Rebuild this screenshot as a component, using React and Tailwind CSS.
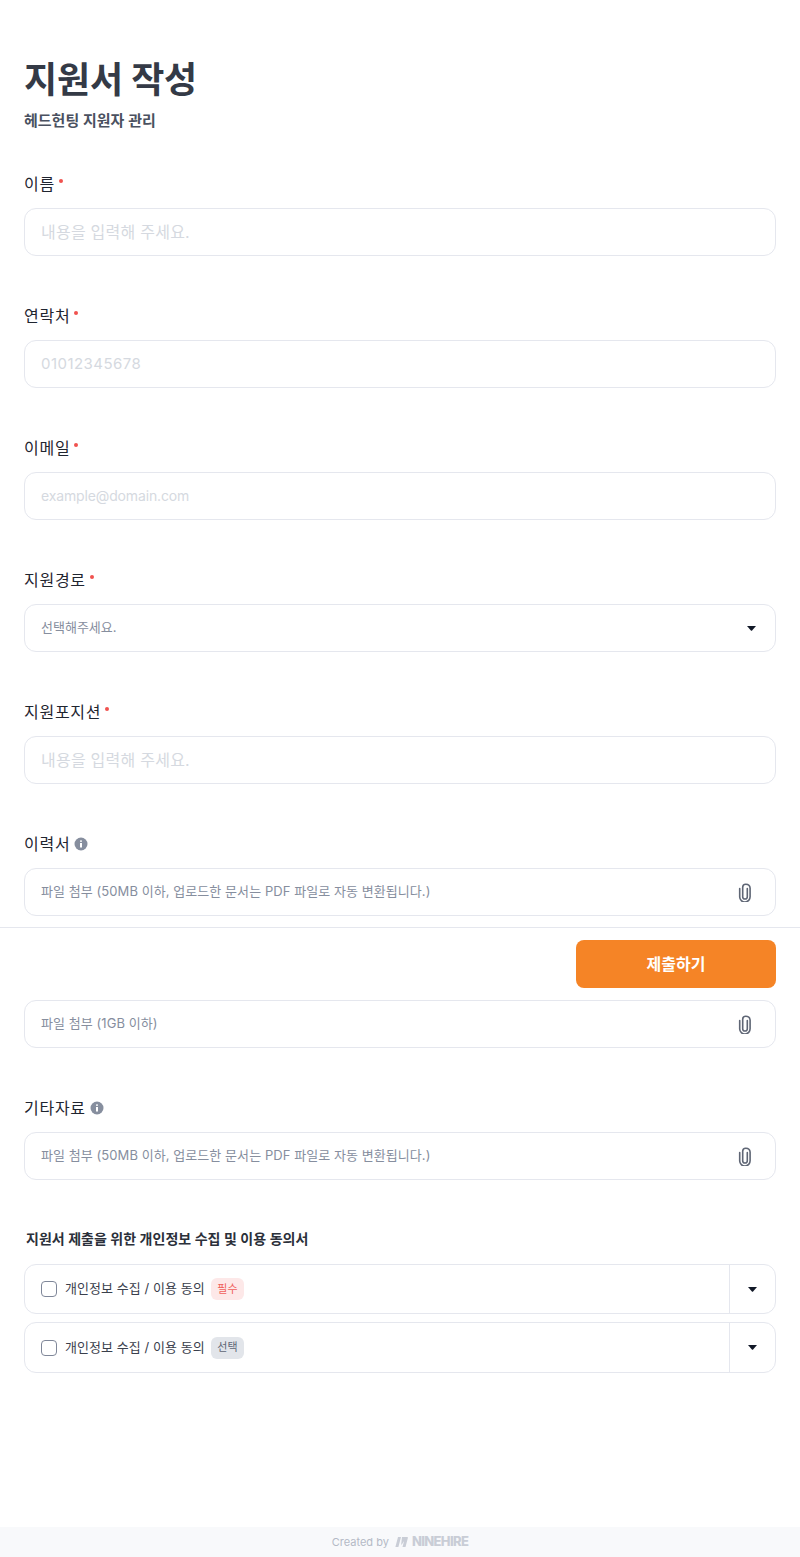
const fields = [
  { label: '이름', required: true, placeholder: '내용을 입력해 주세요.', kind: 'text', textClass: 'text-base tracking-[0.015em]' },
  { label: '연락처', required: true, placeholder: '01012345678', kind: 'text', textClass: 'text-[15px] tracking-[0.03em]' },
  { label: '이메일', required: true, placeholder: 'example@domain.com', kind: 'text', textClass: 'text-sm tracking-[-0.01em]' },
  { label: '지원경로', required: true, placeholder: '선택해주세요.', kind: 'select' },
  { label: '지원포지션', required: true, placeholder: '내용을 입력해 주세요.', kind: 'text', textClass: 'text-base tracking-[0.015em]' },
  { label: '이력서', info: true, placeholder: '파일 첨부 (50MB 이하, 업로드한 문서는 PDF 파일로 자동 변환됩니다.)', kind: 'file' },
  { label: '포트폴리오', info: true, placeholder: '파일 첨부 (1GB 이하)', kind: 'file' },
  { label: '기타자료', info: true, placeholder: '파일 첨부 (50MB 이하, 업로드한 문서는 PDF 파일로 자동 변환됩니다.)', kind: 'file' },
];

function Caret() {
  return (
    <svg width="9" height="5" viewBox="0 0 9 5" className="shrink-0">
      <path d="M0 0h9L5.1 4.6a.9.9 0 0 1-1.2 0z" fill="#111827" />
    </svg>
  );
}

function InfoIcon() {
  return (
    <svg width="14" height="14" viewBox="0 0 14 14">
      <circle cx="7" cy="7" r="6.5" fill="#868e9e" />
      <rect x="6" y="6" width="2" height="4.5" fill="#fff" />
      <rect x="6" y="3.2" width="2" height="1.8" rx="0.9" fill="#fff" />
    </svg>
  );
}

function ClipIcon() {
  return (
    <svg width="14" height="19" viewBox="0 0 14 19" fill="none" stroke="#5f6675" strokeWidth="1.6" strokeLinecap="round" className="shrink-0">
      <path d="M9.3 5.5v8.2a2.3 2.3 0 0 1-4.6 0V4.2a3 3 0 0 1 3-3h.2a4.2 4.2 0 0 1 4.2 3.8v8.6a5.2 5.2 0 0 1-10.4.4V5.5" />
    </svg>
  );
}

function Field({ field }) {
  return (
    <div className="flex flex-col gap-3">
      <div className="flex h-6 items-center gap-1 text-base tracking-[0.045em] text-[#1f2530]">
        <span>{field.label}</span>
        {field.required && <span className="mb-1.5 h-1 w-1 rounded-full bg-[#f0524f]" />}
        {field.info && <InfoIcon />}
      </div>
      {field.kind === 'text' && (
        <div className={`flex h-12 items-center rounded-xl border border-[#e5e7ee] px-4 text-[#d5d9e0] ${field.textClass}`}>
          {field.placeholder}
        </div>
      )}
      {field.kind === 'select' && (
        <div className="flex h-12 items-center justify-between rounded-xl border border-[#e5e7ee] pl-4 pr-[19px] text-[13px] text-[#868e9e]">
          <span>{field.placeholder}</span>
          <Caret />
        </div>
      )}
      {field.kind === 'file' && (
        <div className="flex h-12 items-center justify-between rounded-xl border border-[#e5e7ee] pl-4 pr-[23px] text-[13px] tracking-[0.005em] text-[#868e9e]">
          <span>{field.placeholder}</span>
          <ClipIcon />
        </div>
      )}
    </div>
  );
}

function Consent({ badge, badgeClass, heightClass }) {
  return (
    <div className={`flex items-stretch rounded-xl border border-[#e5e7ee] ${heightClass}`}>
      <div className="flex flex-1 items-center pl-4">
        <span className="h-4 w-4 rounded border border-[#7f8799]" />
        <span className="ml-2 text-[13px] tracking-[0.005em] text-[#3a404c]">개인정보 수집 / 이용 동의</span>
        <span className={`ml-1.5 flex h-[22px] w-[33px] items-center justify-center rounded-md text-[11px] ${badgeClass}`}>{badge}</span>
      </div>
      <div className="flex w-[46px] items-center justify-center border-l border-[#e5e7ee]">
        <Caret />
      </div>
    </div>
  );
}

export default function App() {
  return (
    <div className="relative flex h-[1557px] flex-col bg-white font-['Inter','Noto_Sans_CJK_KR',sans-serif]">
      <div className="flex-1 px-6 pt-[54px]">
        <h1 className="text-[36px] font-bold leading-[52px] tracking-[-0.005em] text-[#343a46]">지원서 작성</h1>
        <p className="mt-[3px] text-[15px] font-semibold leading-6 text-[#4a5160]">헤드헌팅 지원자 관리</p>

        <div className="mt-[39px] flex flex-col gap-12">
          {fields.map((f) => (
            <Field key={f.label} field={f} />
          ))}
        </div>

        <p className="ml-0.5 mt-[49px] text-sm font-semibold leading-5 text-[#2b303a]">지원서 제출을 위한 개인정보 수집 및 이용 동의서</p>
        <div className="mt-[15px] flex flex-col gap-2">
          <Consent badge="필수" badgeClass="bg-[#fde8e8] text-[#f0605c]" heightClass="h-[50px]" />
          <Consent badge="선택" badgeClass="bg-[#e2e5ea] text-[#5f6675]" heightClass="h-[51px]" />
        </div>
      </div>

      {/* submit bar sits over the form */}
      <div className="absolute inset-x-0 top-[927px] flex h-[73px] justify-end border-t border-[#e5e7ee] bg-white px-6 pt-3">
        <button type="button" className="h-12 w-[200px] rounded-lg bg-[#f58426] text-base font-semibold text-white">제출하기</button>
      </div>

      <div className="flex h-[30px] items-center justify-center gap-1.5 bg-[#f8f9fb] text-[11px] text-[#b4bac6]">
        <span>Created by</span>
        <span className="flex items-center gap-1 text-[#c9cdd6]">
          <svg width="13" height="10" viewBox="0 0 13 10">
            <path d="M3 0h3L3.4 10H0.4zM7 0h5c.8 0 1 .5.8 1.2L10.5 10h-3l1.6-6-2.6 4-.3-1z" fill="#c9cdd6" />
          </svg>
          <span className="text-[13px] font-extrabold tracking-[-0.05em]">NINEHIRE</span>
        </span>
      </div>
    </div>
  );
}
